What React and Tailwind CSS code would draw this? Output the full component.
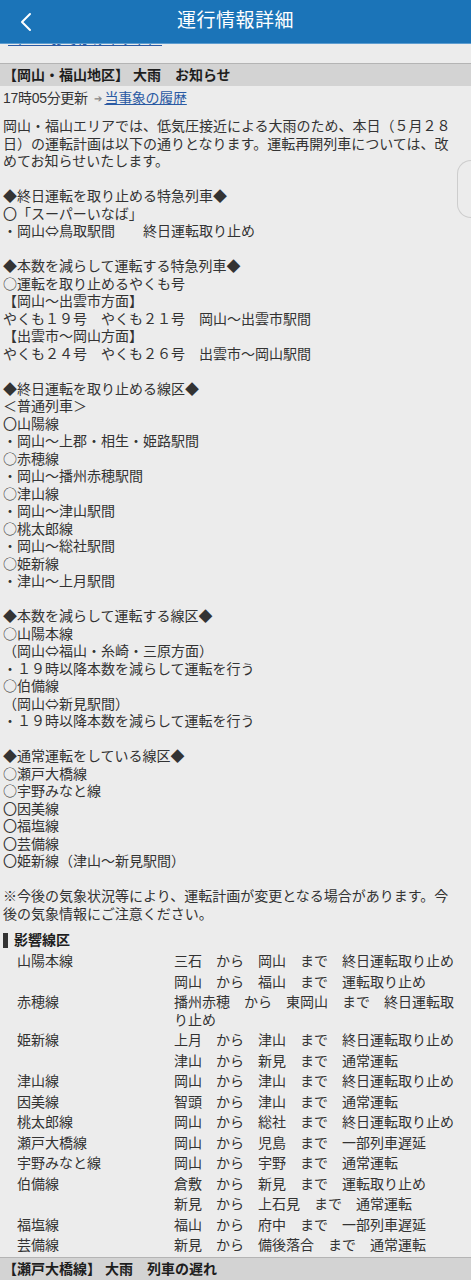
import React from 'react';

const font = { fontFamily: '"Liberation Sans", "Noto Sans CJK JP", sans-serif' };
const cjk = { fontFamily: '"Noto Sans CJK JP", "Liberation Sans", sans-serif' };

// lines broken where the app wraps them
const bodyLines = [
  '岡山・福山エリアでは、低気圧接近による大雨のため、本日（５月２８',
  '日）の運転計画は以下の通りとなります。運転再開列車については、改',
  'めてお知らせいたします。',
  '',
  '◆終日運転を取り止める特急列車◆',
  '〇「スーパーいなば」',
  '・岡山⇔鳥取駅間　　終日運転取り止め',
  '',
  '◆本数を減らして運転する特急列車◆',
  '○運転を取り止めるやくも号',
  '【岡山～出雲市方面】',
  'やくも１９号　やくも２１号　岡山～出雲市駅間',
  '【出雲市～岡山方面】',
  'やくも２４号　やくも２６号　出雲市～岡山駅間',
  '',
  '◆終日運転を取り止める線区◆',
  '＜普通列車＞',
  '〇山陽線',
  '・岡山～上郡・相生・姫路駅間',
  '○赤穂線',
  '・岡山～播州赤穂駅間',
  '○津山線',
  '・岡山～津山駅間',
  '○桃太郎線',
  '・岡山～総社駅間',
  '○姫新線',
  '・津山～上月駅間',
  '',
  '◆本数を減らして運転する線区◆',
  '○山陽本線',
  '（岡山⇔福山・糸崎・三原方面）',
  '・１９時以降本数を減らして運転を行う',
  '○伯備線',
  '（岡山⇔新見駅間）',
  '・１９時以降本数を減らして運転を行う',
  '',
  '◆通常運転をしている線区◆',
  '○瀬戸大橋線',
  '○宇野みなと線',
  '〇因美線',
  '〇福塩線',
  '〇芸備線',
  '〇姫新線（津山～新見駅間）',
  '',
  '※今後の気象状況等により、運転計画が変更となる場合があります。今',
  '後の気象情報にご注意ください。',
];

const affected = [
  { line: '山陽本線', status: '三石　から　岡山　まで　終日運転取り止め' },
  { line: '', status: '岡山　から　福山　まで　運転取り止め' },
  { line: '赤穂線', status: '播州赤穂　から　東岡山　まで　終日運転取り止め' },
  { line: '姫新線', status: '上月　から　津山　まで　終日運転取り止め' },
  { line: '', status: '津山　から　新見　まで　通常運転' },
  { line: '津山線', status: '岡山　から　津山　まで　終日運転取り止め' },
  { line: '因美線', status: '智頭　から　津山　まで　通常運転' },
  { line: '桃太郎線', status: '岡山　から　総社　まで　終日運転取り止め' },
  { line: '瀬戸大橋線', status: '岡山　から　児島　まで　一部列車遅延' },
  { line: '宇野みなと線', status: '岡山　から　宇野　まで　通常運転' },
  { line: '伯備線', status: '倉敷　から　新見　まで　運転取り止め' },
  { line: '', status: '新見　から　上石見　まで　通常運転' },
  { line: '福塩線', status: '福山　から　府中　まで　一部列車遅延' },
  { line: '芸備線', status: '新見　から　備後落合　まで　通常運転' },
];

const SectionBar = ({ children }) => (
  <div className="border-t border-[#b4b4b4] bg-[#d3d3d3] h-[23px] flex items-center px-[3px] text-[14px] font-bold text-[#1e1e1e]">
    {children}
  </div>
);

export default function App() {
  return (
    <div className="relative w-[471px] h-[1280px] overflow-hidden bg-[#ececec] text-[#333]" style={font}>
      {/* top bar */}
      <div className="h-[44px] bg-[#1b74b8] border-b border-[#5d9dd0] flex items-center relative">
        <svg className="absolute left-[19px] top-[12px]" width="14" height="20" viewBox="0 0 14 20" fill="none">
          <path d="M11 2 L3 10 L11 18" stroke="white" strokeWidth="2" strokeLinecap="round" strokeLinejoin="round" />
        </svg>
        <div className="flex-1 text-center text-white text-[19px] tracking-[0.5px]">運行情報詳細</div>
      </div>

      {/* link scrolled mostly out of view */}
      <div className="h-[19px] overflow-hidden px-[8px]">
        <div className="-mt-[13px] leading-[17px] text-[14px] text-[#2a5aa3]">
          <span className="underline">（ＪＲおでかけネット）</span>
        </div>
      </div>

      <SectionBar>【岡山・福山地区】 大雨　お知らせ</SectionBar>

      <div className="h-[24px] flex items-center px-[3px] text-[14px] tracking-[-0.3px]">
        <span>17時05分更新</span>
        <span className="ml-[6px] text-[10px] text-[#888]">➔</span>
        <span className="ml-[3px] text-[#2a5aa3] underline">当事象の履歴</span>
      </div>

      <div className="pt-[7px] px-[3px] text-[14px] leading-[17.5px] whitespace-nowrap" style={cjk}>
        {bodyLines.map((l, i) => (
          <div key={i} className="min-h-[17.5px]">{l}</div>
        ))}
      </div>

      <div className="mt-[10px] px-[3px] flex items-center gap-[6px] text-[14px] leading-[17.5px] font-bold text-[#1e1e1e]">
        <span className="w-[5px] h-[15px] bg-[#333]"></span>
        <span>影響線区</span>
      </div>

      <div className="mt-[1px] text-[14px] leading-[17.5px]" style={cjk}>
        {affected.map((r, i) => (
          <div key={i} className="flex py-[1.5px]">
            <div className="w-[174px] pl-[17px] shrink-0">{r.line}</div>
            <div className="w-[286px]">{r.status}</div>
          </div>
        ))}
      </div>

      <div className="mt-[2px]">
        <SectionBar>【瀬戸大橋線】 大雨　列車の遅れ</SectionBar>
      </div>

      {/* pull tab on right edge */}
      <div className="absolute left-[457px] top-[160px] w-[16px] h-[58px] border border-r-0 border-[#cdcdcd] rounded-l-[14px]"></div>
    </div>
  );
}
